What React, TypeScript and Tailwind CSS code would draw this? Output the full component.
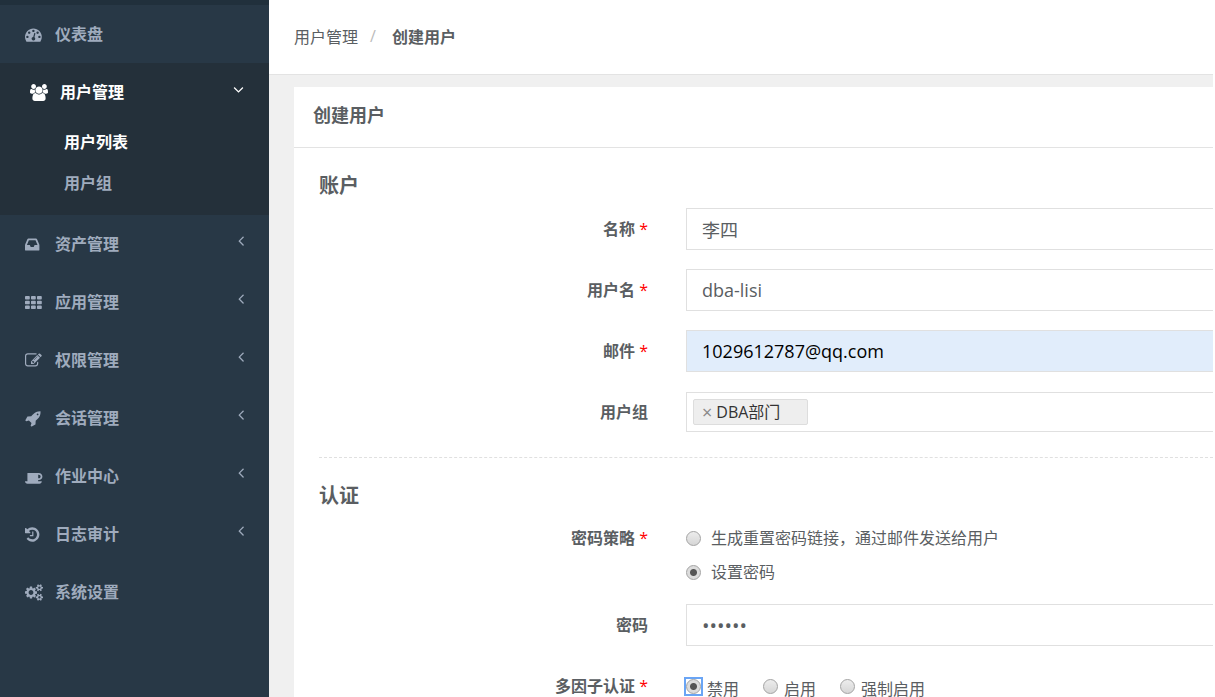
import type { ReactNode } from "react";
import clsx from "clsx";

type IconName = "dashboard" | "users" | "inbox" | "th" | "edit" | "rocket" | "coffee" | "history" | "cogs";

const SMALL_COG =
    "v-140q0-16-149-31q-12-27-30-52q51-113 51-138q0-4-4-7q-122-71-124-71q-8 0-46 47t-52 68q-20-2-30-2t-30 2q-14-21-52-68t-46-47q-2 0-124 71q-4 3-4 7q0 25 51 138q-18 25-30 52q-149 15-149 31v140q0 16 149 31q13 29 30 52q-51 113-51 138q0 4 4 7q4 2 35 20t59 34t30 16q8 0 46-46.5t52-67.5q20 2 30 2t30-2q51 71 92 112l6 2q4 0 124-70q4-3 4-7q0-25-51-138q17-23 30-52q149-15 149-31z";

const CELL = "v192q0 40-28 68t-68 28h-320q-40 0-68-28t-28-68v-192q0-40 28-68t68-28h320q40 0 68 28t28 68z";

// flip: glyphs whose y axis points up
const ICONS: Record<IconName, { d: string; flip?: boolean; x?: number }> = {
    dashboard: {
        d: "M384 1152q0-53-37.5-90.5t-90.5-37.5-90.5 37.5-37.5 90.5 37.5 90.5 90.5 37.5 90.5-37.5 37.5-90.5zm192-448q0-53-37.5-90.5t-90.5-37.5-90.5 37.5-37.5 90.5 37.5 90.5 90.5 37.5 90.5-37.5 37.5-90.5zm428 481l101-382q6-26-7.5-48.5t-38.5-29.5-48 6.5-30 39.5l-101 382q-60 5-107 43.5t-63 98.5q-20 77 20 146t117 89 146-20 89-117q16-60-6-117t-72-91zm660-33q0-53-37.5-90.5t-90.5-37.5-90.5 37.5-37.5 90.5 37.5 90.5 90.5 37.5 90.5-37.5 37.5-90.5zm-640-640q0-53-37.5-90.5t-90.5-37.5-90.5 37.5-37.5 90.5 37.5 90.5 90.5 37.5 90.5-37.5 37.5-90.5zm448 192q0-53-37.5-90.5t-90.5-37.5-90.5 37.5-37.5 90.5 37.5 90.5 90.5 37.5 90.5-37.5 37.5-90.5zm320 448q0 261-141 483-19 29-54 29h-1402q-35 0-54-29-141-221-141-483 0-182 71-348t191-286 286-191 348-71 348 71 286 191 191 286 71 348z",
    },
    users: {
        flip: true,
        d: "M593 640q-162 -5 -265 -128h-134q-82 0 -138 40.5t-56 118.5q0 353 124 353q6 0 43.5 -21t97.5 -42.5t119 -21.5q67 0 133 23q-5 -37 -5 -66q0 -139 81 -256zM1664 3q0 -120 -73 -189.5t-194 -69.5h-874q-121 0 -194 69.5t-73 189.5q0 53 3.5 103.5t14 109t26.5 108.5t43 97.5t62 81t85.5 53.5t111.5 20q10 0 43 -21.5t73 -48t107 -48t135 -21.5t135 21.5t107 48t73 48t43 21.5q61 0 111.5 -20t85.5 -53.5t62 -81t43 -97.5t26.5 -108.5t14 -109t3.5 -103.5zM640 1280q0 -106 -75 -181t-181 -75t-181 75t-75 181t75 181t181 75t181 -75t75 -181zM1344 896q0 -159 -112.5 -271.5t-271.5 -112.5t-271.5 112.5t-112.5 271.5t112.5 271.5t271.5 112.5t271.5 -112.5t112.5 -271.5zM1920 671q0 -78 -56 -118.5t-138 -40.5h-134q-103 123 -265 128q81 117 81 256q0 29 -5 66q66 -23 133 -23q59 0 119 21.5t97.5 42.5t43.5 21q124 0 124 -353zM1792 1280q0 -106 -75 -181t-181 -75t-181 75t-75 181t75 181t181 75t181 -75t75 -181z",
    },
    inbox: {
        d: "M1023 960h316q-1-3-2.5-8.5t-2.5-7.5l-212-496H414l-212 496q-1 3-2.5 8.5T197 960h316l95 192h320zM1536 990v482q0 26-19 45t-45 19H64q-26 0-45-19t-19-45V990q0-62 25-123l238-552q10-25 36.5-42t52.5-17h832q26 0 52.5 17t36.5 42l238 552q25 61 25 123z",
    },
    th: {
        d: [288, 800, 1312].map((y) => [512, 1152, 1792].map((x) => `M${x} ${y}${CELL}`).join("")).join(""),
    },
    edit: {
        d: "M888 1184l116-116-152-152-116 116v56h96v96h56zm440-720q-16-16-33 1l-350 350q-17 17-1 33t33-1l350-350q17-17 1-33zm80 594v190q0 119-84.5 203.5t-203.5 84.5h-832q-119 0-203.5-84.5t-84.5-203.5v-832q0-119 84.5-203.5t203.5-84.5h832q63 0 117 25 15 7 18 23 3 17-9 29l-49 49q-14 14-32 8-23-6-45-6h-832q-66 0-113 47t-47 113v832q0 66 47 113t113 47h832q66 0 113-47t47-113v-126q0-13 9-22l64-64q15-15 35-7t20 29zm-96-738l288 288-672 672h-288v-288zm444 132l-92 92-288-288 92-92q28-28 68-28t68 28l152 152q28 28 28 68t-28 68z",
    },
    rocket: {
        d: "M1440 448q0-40-28-68t-68-28-68 28-28 68 28 68 68 28 68-28 28-68zM1664 160q0 249-75.5 430.5t-253.5 360.5q-81 80-195 176l-20 379q-2 16-16 26l-384 224q-7 4-16 4-12 0-23-9l-64-64q-13-14-8-32l85-276-281-281-276 85q-3 1-9 1-14 0-23-9l-64-64q-17-19-5-39l224-384q10-14 26-16l379-20q96-114 176-195 188-187 358-258t431-71q14 0 24 9.5t10 22.5z",
    },
    coffee: {
        d: "M1664 896q0-80-56-136t-136-56h-64v384h64q80 0 136-56t56-136zM0 1408h1792q0 106-75 181t-181 75H256q-106 0-181-75t-75-181zM1856 896q0 159-112.5 271.5T1472 1280h-64v32q0 92-66 158t-158 66H480q-92 0-158-66t-66-158V576q0-26 19-45t45-19h1152q159 0 271.5 112.5T1856 896z",
    },
    history: {
        x: 128,
        d: "M1664 896q0 156-61 298t-164 245-245 164-298 61q-172 0-327-72.5t-264-204.5q-7-10-6.5-22.5t8.5-20.5l137-138q10-9 25-9 16 2 23 12 73 95 179 147t225 52q104 0 198.5-40.5t163.5-109.5 109.5-163.5 40.5-198.5-40.5-198.5-109.5-163.5-163.5-109.5-198.5-40.5q-98 0-188 35.5t-160 101.5l137 138q31 30 14 69-17 40-59 40h-448q-26 0-45-19t-19-45v-448q0-42 40-59 39-17 69 14l130 129q107-101 244.5-156.5t284.5-55.5q156 0 298 61t245 164 164 245 61 298zm-640-288v448q0 14-9 23t-23 9h-320q-14 0-23-9t-9-23v-64q0-14 9-23t23-9h224v-352q0-14 9-23t23-9h64q14 0 23 9t9 23z",
    },
    cogs: {
        flip: true,
        d:
            "M896 640q0 106 -75 181t-181 75t-181 -75t-75 -181t75 -181t181 -75t181 75t75 181zM1664 128q0 52 -38 90t-90 38t-90 -38t-38 -90q0 -53 37.5 -90.5t90.5 -37.5t90.5 37.5t37.5 90.5zM1664 1152q0 52 -38 90t-90 38t-90 -38t-38 -90q0 -53 37.5 -90.5t90.5 -37.5t90.5 37.5t37.5 90.5zM1280 731v-185q0 -10 -7 -19.5t-16 -10.5l-155 -24q-11 -35 -32 -76q34 -48 90 -115q7 -11 7 -20q0 -12 -7 -19q-23 -30 -82.5 -89.5t-78.5 -59.5q-11 0 -21 7l-115 90q-37 -19 -77 -31q-11 -108 -23 -155q-7 -24 -30 -24h-186q-11 0 -20 7.5t-10 17.5l-23 153q-34 10 -75 31l-118 -89q-7 -7 -20 -7q-11 0 -21 8q-144 133 -144 160q0 9 7 19q10 14 41 53t47 61q-23 44 -35 82l-152 24q-10 1 -17 9.5t-7 19.5v185q0 10 7 19.5t16 10.5l155 24q11 35 32 76q-34 48 -90 115q-7 11 -7 20q0 12 7 20q22 30 82 89t79 59q11 0 21 -7l115 -90q34 18 77 32q11 108 23 154q7 24 30 24h186q11 0 20 -7.5t10 -17.5l23 -153q34 -10 75 -31l118 89q8 7 20 7q11 0 21 -8q144 -133 144 -160q0 -8 -7 -19q-12 -16 -42 -54t-45 -60q23 -48 34 -82l152 -23q10 -2 17 -10.5t7 -19.5z" +
            "M1920 198" + SMALL_COG + "M1920 1222" + SMALL_COG,
    },
};

const MENU: { icon: IconName; label: string; children?: string[]; arrow?: boolean }[] = [
    { icon: "dashboard", label: "仪表盘" },
    { icon: "users", label: "用户管理", children: ["用户列表", "用户组"] },
    { icon: "inbox", label: "资产管理", arrow: true },
    { icon: "th", label: "应用管理", arrow: true },
    { icon: "edit", label: "权限管理", arrow: true },
    { icon: "rocket", label: "会话管理", arrow: true },
    { icon: "coffee", label: "作业中心", arrow: true },
    { icon: "history", label: "日志审计", arrow: true },
    { icon: "cogs", label: "系统设置" },
];

const inputClass =
    "h-[42px] w-full min-w-0 border border-r-0 border-[#e0e0e0] px-[15px] font-['Open_Sans','Noto_Sans_CJK_SC',sans-serif] outline-none";

function Icon({ name }: { name: IconName }) {
    const { d, flip, x = 0 } = ICONS[name];
    return (
        <svg viewBox={`${x} 0 1920 1792`} className="h-[17px] w-[18px] shrink-0 overflow-visible fill-current" aria-hidden="true">
            <path d={d} transform={flip ? "translate(0 1536) scale(1 -1)" : undefined} />
        </svg>
    );
}

function AngleLeft() {
    return (
        <svg viewBox="576 0 640 1792" className="mb-2 ml-auto h-[17px] w-[6px] fill-current" aria-hidden="true">
            <path d="M1203 544q0 13-10 23l-393 393 393 393q10 10 10 23t-10 23l-50 50q-10 10-23 10t-23-10l-466-466q-10-10-10-23t10-23l466-466q10-10 23-10t23 10l50 50q10 10 10 23z" />
        </svg>
    );
}

function AngleDown() {
    return (
        <svg viewBox="320 0 1152 1792" className="mb-1.5 ml-auto h-[17px] w-[11px] fill-current" aria-hidden="true">
            <path d="M1395 736q0 13-10 23l-466 466q-10 10-23 10t-23-10l-466-466q-10-10-10-23t10-23l50-50q10-10 23-10t23 10l393 393 393-393q10-10 23-10t23 10l50 50q10 10 10 23z" />
        </svg>
    );
}

function Sidebar() {
    return (
        <nav className="w-[269px] shrink-0 border-t-5 border-[#21303c] bg-[#283846] font-bold text-[#9fabbd]">
            <ul>
                {MENU.map((item) => (
                    <li key={item.label} className={clsx(item.children && "bg-[#24303a] pb-3")}>
                        <a
                            href="#"
                            className={clsx(
                                "flex h-[58px] items-center gap-3 pr-[25px]",
                                item.children ? "pl-[30px] text-white" : "pl-[25px]"
                            )}
                        >
                            <Icon name={item.icon} />
                            <span className="pb-0.5">{item.label}</span>
                            {item.arrow && <AngleLeft />}
                            {item.children && <AngleDown />}
                        </a>
                        {item.children && (
                            <ul>
                                {item.children.map((child, index) => (
                                    <li key={child}>
                                        <a href="#" className={clsx("flex h-[41px] items-center pb-0.5 pl-16", index === 0 && "text-white")}>
                                            {child}
                                        </a>
                                    </li>
                                ))}
                            </ul>
                        )}
                    </li>
                ))}
            </ul>
        </nav>
    );
}

function Label({ text, required, htmlFor }: { text: string; required?: boolean; htmlFor?: string }) {
    const content = (
        <>
            {text}
            {required && <span className="font-['Open_Sans',sans-serif] font-normal text-[#ff0000]"> *</span>}
        </>
    );
    if (!htmlFor) {
        return <span className="pb-0.5 text-right font-bold">{content}</span>;
    }
    return (
        <label htmlFor={htmlFor} className="pb-0.5 text-right font-bold">
            {content}
        </label>
    );
}

function Row({ children }: { children: ReactNode }) {
    return <div className="mb-[19px] grid min-h-[42px] grid-cols-[329px_1fr] items-center gap-x-[38px]">{children}</div>;
}

function Radio({ name, label, checked, focused }: { name: string; label: string; checked?: boolean; focused?: boolean }) {
    const inline = name === "mfa";
    return (
        <label className={clsx("flex items-center", inline ? "gap-1.5" : "h-[34px] gap-2.5")}>
            <span className={clsx("flex shrink-0", focused && "outline-2 outline-[#6aa5f5]")}>
                <input
                    type="radio"
                    name={name}
                    defaultChecked={checked}
                    className="size-[15px] appearance-none rounded-full border border-[#a3a3a3] bg-linear-to-b from-[#ededed] to-[#d6d6d6] checked:bg-[radial-gradient(circle,#555_0_3px,#dcdcdc_4px)]"
                />
            </span>
            <span className={inline ? "pt-1" : "pb-0.5"}>{label}</span>
        </label>
    );
}

export default function App() {
    return (
        <div className="flex h-screen overflow-hidden bg-white pr-0.5 font-['Noto_Sans_CJK_SC',sans-serif] text-base leading-6 text-[#5a5e62]">
            <Sidebar />
            <main className="min-w-0 grow bg-[#f0f0f0]">
                <ol className="flex h-[75px] items-center border-b border-[#e3e3e3] bg-white pb-0.5 pl-[25px]">
                    <li>
                        <a href="#">用户管理</a>
                    </li>
                    <li className="px-3 font-['Open_Sans',sans-serif] text-[#bbbbbb]">/</li>
                    <li className="pl-1 font-bold">创建用户</li>
                </ol>

                <section className="mt-3 ml-[25px] bg-white">
                    <header className="h-[61px] border-b border-[#e3e3e3] px-[19px] pt-[15px]">
                        <h5 className="text-lg leading-6 font-bold">创建用户</h5>
                    </header>

                    <form className="pt-[22px] pl-[25px]">
                        <h3 className="mb-2 text-xl leading-[30px] font-bold">账户</h3>
                        <Row>
                            <Label text="名称" required htmlFor="name" />
                            <input id="name" defaultValue="李四" className={clsx(inputClass, "text-lg")} />
                        </Row>
                        <Row>
                            <Label text="用户名" required htmlFor="username" />
                            <input id="username" defaultValue="dba-lisi" className={clsx(inputClass, "text-lg")} />
                        </Row>
                        <Row>
                            <Label text="邮件" required htmlFor="email" />
                            <input
                                id="email"
                                type="email"
                                defaultValue="1029612787@qq.com"
                                className={clsx(inputClass, "bg-[#e1edfb] text-lg text-black")}
                            />
                        </Row>
                        <Row>
                            <Label text="用户组" />
                            <div className="flex h-10 items-center border border-r-0 border-[#e0e0e0] pl-1.5">
                                <span className="flex h-[26px] w-[115px] items-center gap-1 rounded-xs border border-[#dddddd] bg-[#eeeeee] pl-2 font-['Open_Sans','Noto_Sans_CJK_SC',sans-serif] text-[#333333]">
                                    <button type="button" aria-label="移除 DBA部门" className="text-lg text-[#888888]">
                                        ×
                                    </button>
                                    DBA部门
                                </span>
                            </div>
                        </Row>

                        <hr className="mt-[24px] mb-[22px] border-dashed border-[#e0e0e0]" />

                        <h3 className="mb-[11px] text-xl leading-[30px] font-bold">认证</h3>
                        <div className="mb-[15px] grid grid-cols-[329px_1fr] gap-x-[38px]">
                            <div className="flex h-[34px] items-center justify-end">
                                <Label text="密码策略" required />
                            </div>
                            <div>
                                <Radio name="strategy" label="生成重置密码链接，通过邮件发送给用户" />
                                <Radio name="strategy" label="设置密码" checked />
                            </div>
                        </div>
                        <Row>
                            <Label text="密码" htmlFor="password" />
                            <input id="password" type="password" defaultValue="123456" className={clsx(inputClass, "text-xl")} />
                        </Row>
                        <Row>
                            <Label text="多因子认证" required />
                            <div className="flex gap-6">
                                <Radio name="mfa" label="禁用" checked focused />
                                <Radio name="mfa" label="启用" />
                                <Radio name="mfa" label="强制启用" />
                            </div>
                        </Row>
                    </form>
                </section>
            </main>
        </div>
    );
}
